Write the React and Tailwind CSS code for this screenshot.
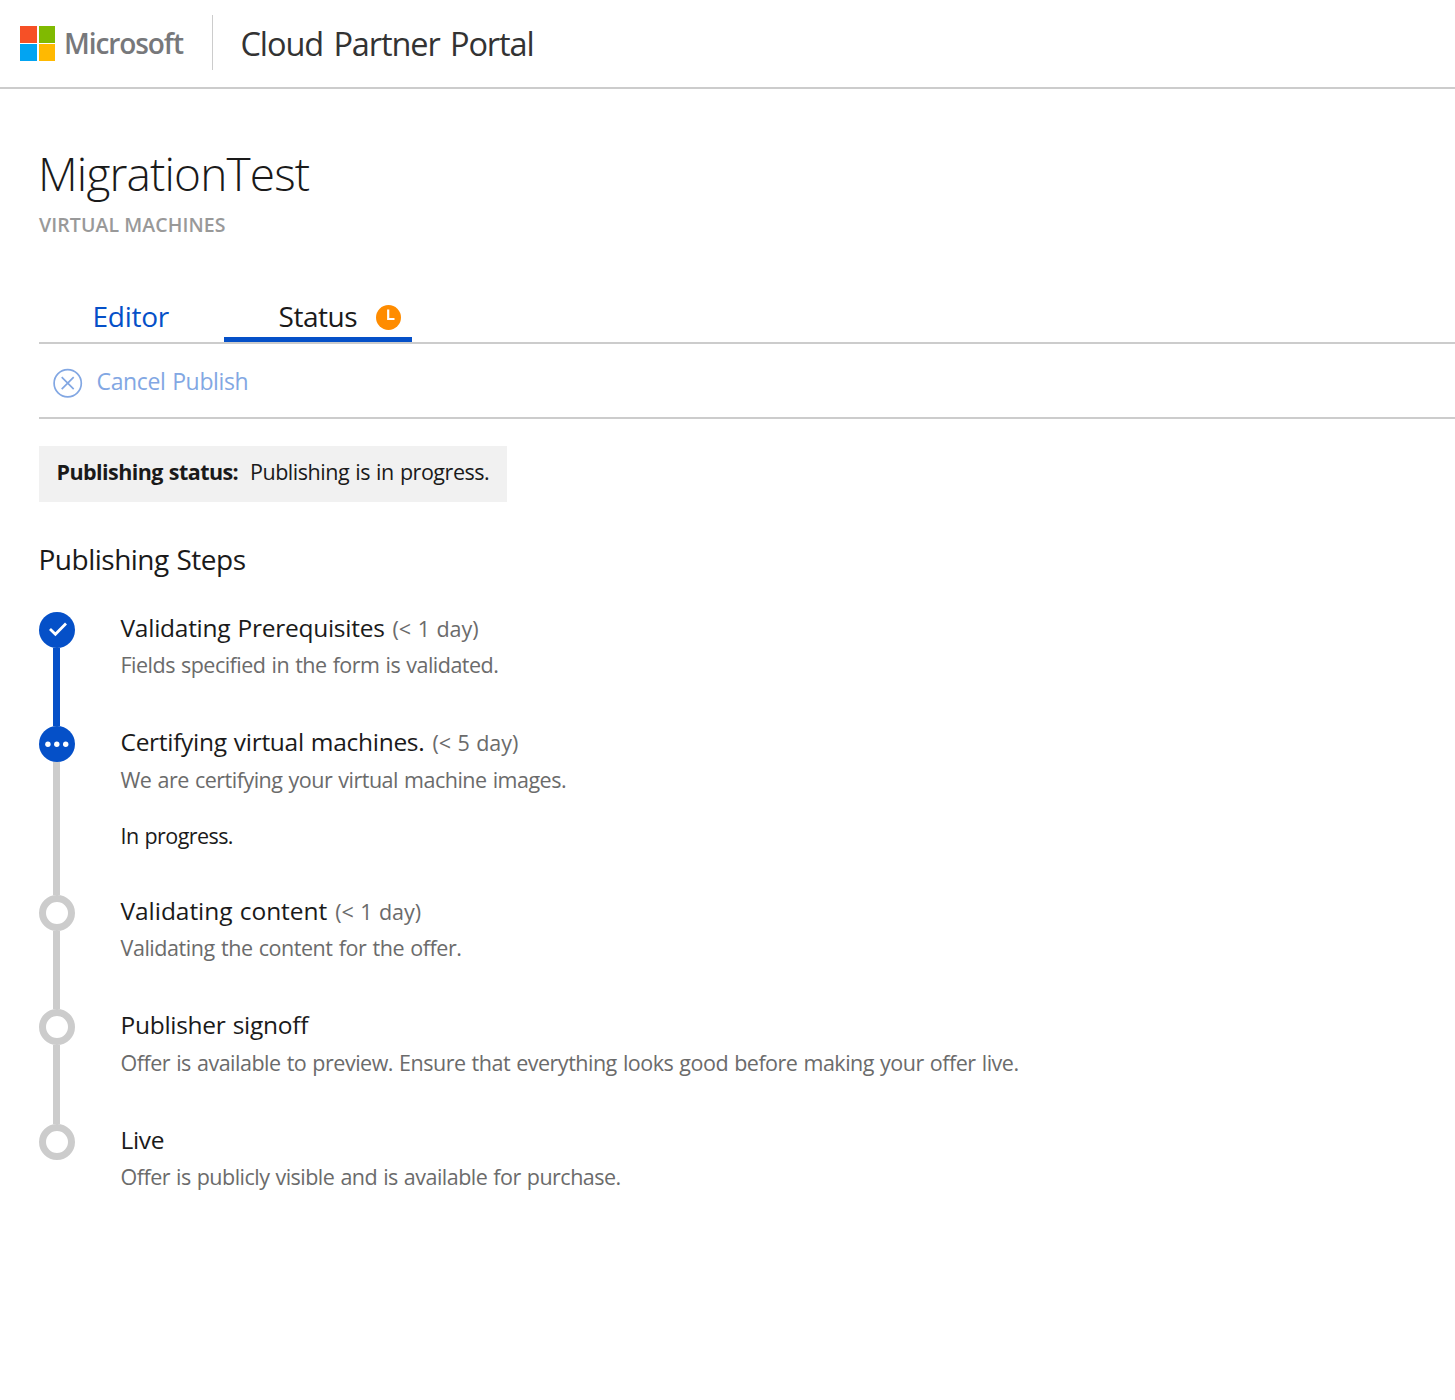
import React from "react";

const steps = [
  {
    title: "Validating Prerequisites",
    titleTracking: "tracking-[-0.26px]",
    duration: "(< 1 day)",
    text: "Fields specified in the form is validated.",
    textTracking: "tracking-[-0.51px]",
    textMargin: "mt-[2px]",
    state: "done",
    height: "h-[114.4px]",
  },
  {
    title: "Certifying virtual machines.",
    titleTracking: "tracking-[-0.29px]",
    duration: "(< 5 day)",
    text: "We are certifying your virtual machine images.",
    textTracking: "tracking-[-0.5px]",
    textMargin: "mt-[3px]",
    note: "In progress.",
    state: "active",
    height: "h-[168.6px]",
  },
  {
    title: "Validating content",
    titleTracking: "tracking-[-0.05px]",
    duration: "(< 1 day)",
    text: "Validating the content for the offer.",
    textTracking: "tracking-[-0.44px]",
    textMargin: "mt-[2px]",
    state: "pending",
    height: "h-[114.4px]",
  },
  {
    title: "Publisher signoff",
    titleTracking: "tracking-[-0.28px]",
    text: "Offer is available to preview. Ensure that everything looks good before making your offer live.",
    textTracking: "tracking-[-0.495px]",
    textMargin: "mt-[4px]",
    state: "pending",
    height: "h-[114.4px]",
  },
  {
    title: "Live",
    titleTracking: "tracking-[-0.3px]",
    text: "Offer is publicly visible and is available for purchase.",
    textTracking: "tracking-[-0.52px]",
    textMargin: "mt-[3px]",
    state: "pending",
    height: "h-[114.4px]",
  },
];

function StepMarker({ state }) {
  if (state === "pending") {
    return <div className="size-9 shrink-0 rounded-full border-7 border-[#cccccc] bg-white" />;
  }
  return (
    <div className="size-9 shrink-0 rounded-full bg-[#0550c8]">
      <svg viewBox="0 0 36 36" className="size-9">
        {state === "done" ? (
          <path d="M11 17l5.4 5.2L27 11.6" fill="none" stroke="#fff" strokeWidth="2.8" />
        ) : (
          <g fill="#fff">
            <circle cx="8.9" cy="18.3" r="2.7" />
            <circle cx="17.8" cy="18.3" r="2.7" />
            <circle cx="26.7" cy="18.3" r="2.7" />
          </g>
        )}
      </svg>
    </div>
  );
}

function Step({ step, last }) {
  return (
    <li className={`flex ${step.height}`}>
      <div className="flex w-9 flex-col">
        <StepMarker state={step.state} />
        {!last && (
          <div className={`ml-3.5 w-[7px] flex-1 ${step.state === "done" ? "bg-[#0550c8]" : "bg-[#cccccc]"}`} />
        )}
      </div>
      <div className="ml-[45.5px] whitespace-nowrap [word-spacing:1px]">
        <h3 className={`text-[24.5px] leading-[31px] text-[#1a1a1a] ${step.titleTracking}`}>
          {step.title}
          {step.duration && (
            <span className="ml-2 text-[21.5px] tracking-[-0.05px] text-[#6b6b6b]">{step.duration}</span>
          )}
        </h3>
        <p className={`text-[21.5px] leading-[37px] text-[#6b6b6b] ${step.textMargin} ${step.textTracking}`}>
          {step.text}
        </p>
        {step.note && (
          <p className="mt-[19px] text-[21.5px] leading-[37px] tracking-[-0.58px] text-[#1a1a1a]">{step.note}</p>
        )}
      </div>
    </li>
  );
}

export default function App() {
  return (
    <div className="min-h-[1400px] overflow-hidden bg-white font-['Open_Sans','Noto_Sans',sans-serif] text-[#1a1a1a]">
      <header className="flex h-[89px] border-b-2 border-[#cccccc] pl-5">
        <div className="mt-[26px] grid size-[35px] grid-cols-[17px_16px] grid-rows-[17px_17px] gap-x-[2px] gap-y-px">
          <span className="bg-[#f65026]" />
          <span className="bg-[#80ba01]" />
          <span className="bg-[#02a4f2]" />
          <span className="bg-[#ffb901]" />
        </div>
        <span className="ml-[9px] mt-[23px] w-[148px] text-[28px] leading-[40px] font-semibold tracking-[-1.08px] text-[#77787b]">
          Microsoft
        </span>
        <span className="mt-[15px] h-[55px] w-px bg-[#cccccc]" />
        <span className="ml-[27.5px] mt-[24px] text-[32.5px] leading-[40px] tracking-[-1.1px] whitespace-nowrap text-[#333333] [word-spacing:3px]">
          Cloud Partner Portal
        </span>
      </header>

      <main className="pl-[39px]">
        <h1 className="mt-[54px] -ml-px text-[46px] leading-[60px] font-light tracking-[-0.85px]">MigrationTest</h1>
        <p className="mt-[6px] text-[19.5px] leading-[32px] font-semibold tracking-[0.08px] text-[#999999]">
          VIRTUAL MACHINES
        </p>

        <nav className="mt-[51px] flex h-[52px] border-b-2 border-[#cccccc] text-[28px] leading-[48px]">
          <a className="w-[185px] pl-[53.5px] tracking-[-0.25px] text-[#0550c8]">Editor</a>
          <a className="flex w-[188px] border-b-5 border-[#0550c8] pl-[54.5px]">
            <span className="w-[97.5px] tracking-[-0.45px]">Status</span>
            <svg viewBox="0 0 25 25" className="mt-[13px] size-[25px]">
              <circle cx="12.5" cy="12.5" r="12.5" fill="#ff8c00" />
              <path d="M12.2 4.5V14H18.5" fill="none" stroke="#fff" strokeWidth="2.2" />
            </svg>
          </a>
        </nav>

        <div className="flex h-[75px] border-b-2 border-[#cccccc] pl-3.5 text-[#82a7e3]">
          <svg
            viewBox="0 0 30 30"
            className="mt-6 size-[30px]"
            fill="none"
            stroke="currentColor"
            strokeWidth="1.7"
          >
            <circle cx="14.7" cy="15.2" r="13.6" />
            <path d="M8.7 9.2l12 12M20.7 9.2l-12 12" />
          </svg>
          <span className="ml-[13.5px] mt-[17px] text-[23px] leading-[40px] tracking-[-0.35px] [word-spacing:1px]">
            Cancel Publish
          </span>
        </div>

        <div className="mt-[27px] flex h-14 w-[468px] bg-[#f1f1f1] pl-[17.5px] text-[21.5px] leading-[52px] whitespace-nowrap [word-spacing:1px]">
          <strong className="w-[193.5px] font-bold tracking-[-0.57px]">Publishing status:</strong>
          <span className="tracking-[-0.47px]">Publishing is in progress.</span>
        </div>

        <h2 className="mt-[37px] -ml-px pl-[0.5px] text-[28px] leading-[40px] tracking-[-0.5px] [word-spacing:1px]">
          Publishing Steps
        </h2>

        <ul className="mt-[33px]">
          {steps.map((step, i) => (
            <Step key={step.title} step={step} last={i === steps.length - 1} />
          ))}
        </ul>
      </main>
    </div>
  );
}
